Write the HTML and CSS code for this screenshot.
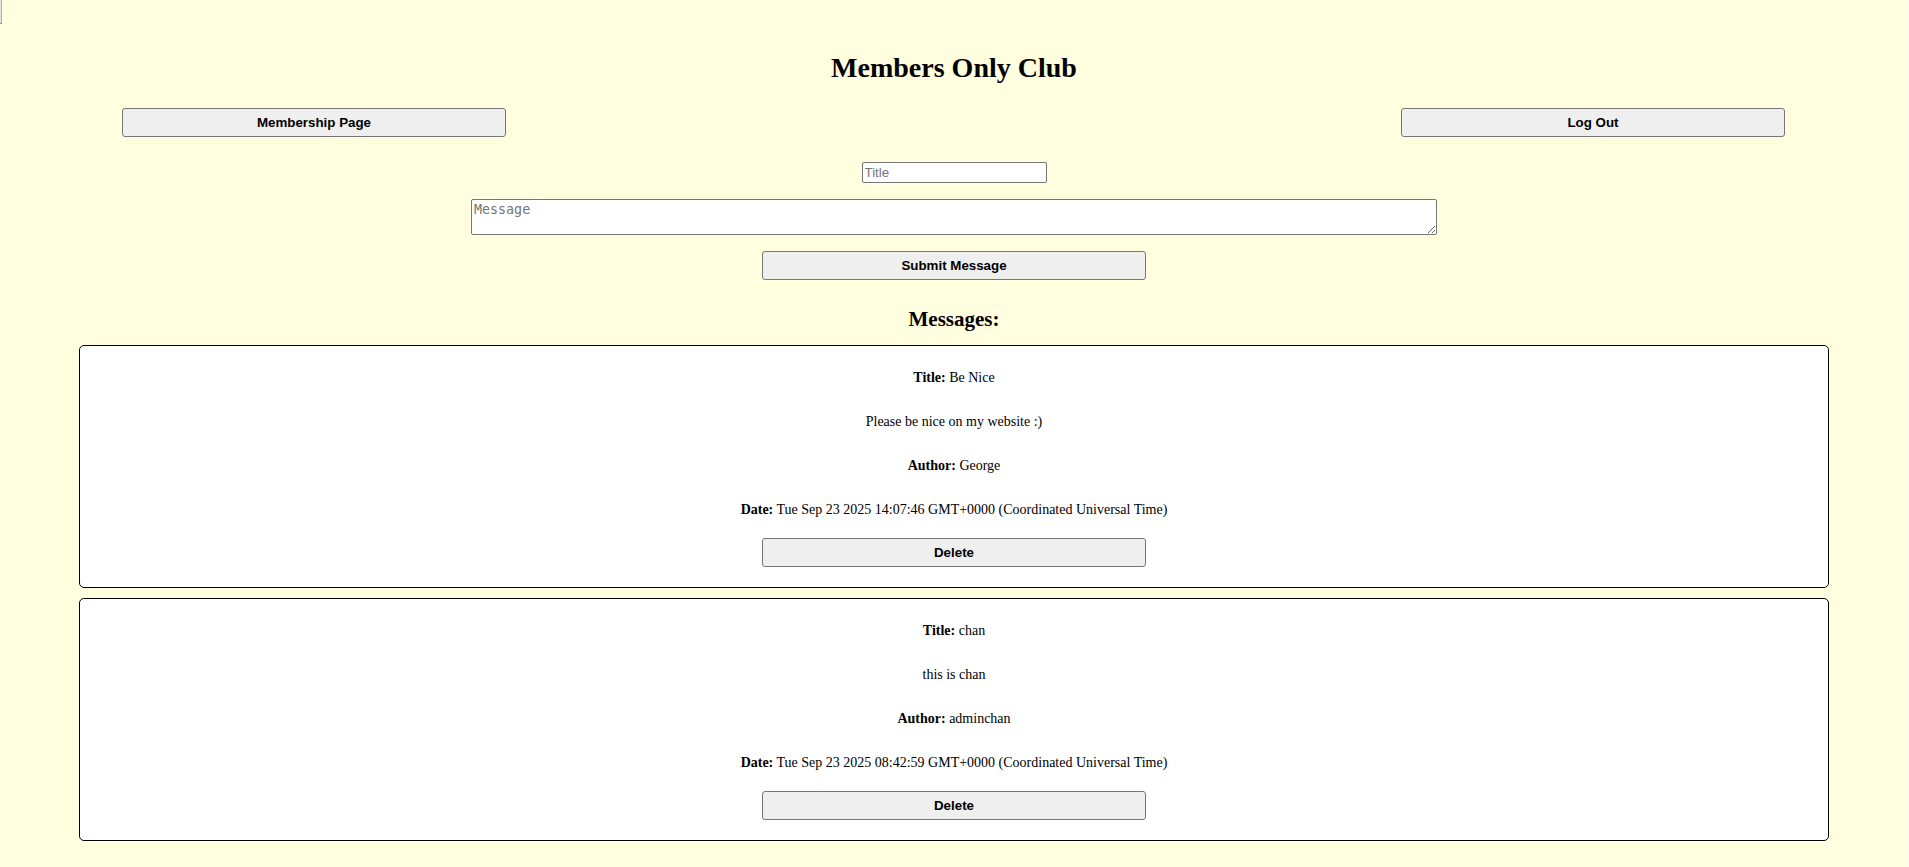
FILE: index.html
```html
<!DOCTYPE html>
<html lang="en">
<head>
<meta charset="utf-8">
<title>Members Only Club</title>
<link rel="stylesheet" href="styles.css">
</head>
<body>
<div class="corner"></div>
<h1 class="site-title">Members Only Club</h1>
<nav class="top-nav">
  <button class="btn" type="button">Membership Page</button>
  <button class="btn" type="button">Log Out</button>
</nav>
<form class="compose">
  <input class="title-input" type="text" placeholder="Title">
  <textarea class="message-input" placeholder="Message"></textarea>
  <button class="btn" type="button">Submit Message</button>
</form>
<h2 class="messages-heading">Messages:</h2>
<section class="messages">
  <article class="card">
    <p class="line"><b>Title:</b> Be Nice</p>
    <p class="line">Please be nice on my website :)</p>
    <p class="line"><b>Author:</b> George</p>
    <p class="line last"><b>Date:</b> Tue Sep 23 2025 14:07:46 GMT+0000 (Coordinated Universal Time)</p>
    <button class="btn" type="button">Delete</button>
  </article>
  <article class="card">
    <p class="line"><b>Title:</b> chan</p>
    <p class="line">this is chan</p>
    <p class="line"><b>Author:</b> adminchan</p>
    <p class="line last"><b>Date:</b> Tue Sep 23 2025 08:42:59 GMT+0000 (Coordinated Universal Time)</p>
    <button class="btn" type="button">Delete</button>
  </article>
</section>
</body>
</html>
```

FILE: styles.css
```css
html {
  background: #f7f7f3;
}
body {
  margin: 0 1px 0 0;
  min-height: 100vh;
  overflow: hidden;
  background: #ffffe0;
  font-family: "Liberation Serif", "Times New Roman", serif;
  color: #000;
}
.corner {
  width: 1px;
  height: 23px;
  background: #e4e4e4;
  border-bottom: 1px solid #8a8a8a;
  border-right: 1px solid #b0b0b0;
}
.site-title {
  margin: 28px 0 0;
  font-size: 28px;
  line-height: 32px;
  font-weight: bold;
  text-align: center;
}
.btn {
  width: 384px;
  box-sizing: border-box;
  padding: 6px;
  font-family: "Liberation Sans", Arial, sans-serif;
  font-size: 13.33px;
  line-height: 15px;
  font-weight: bold;
  color: #000;
  background: #efefef;
  border: 1px solid #767676;
  border-radius: 3px;
}
.top-nav {
  display: flex;
  justify-content: space-between;
  margin-top: 24px;
  padding: 0 123px 0 122px;
}
.compose {
  display: flex;
  flex-direction: column;
  align-items: center;
  margin-top: 25px;
}
.title-input {
  width: 185px;
  height: 21px;
  box-sizing: border-box;
  margin: 0;
  padding: 1px 2px;
  font-family: "Liberation Sans", Arial, sans-serif;
  font-size: 13.33px;
  border: 1px solid #767676;
  border-radius: 2px;
  background: #fff;
}
.title-input::placeholder {
  color: #757575;
}
.message-input {
  width: 966px;
  height: 36px;
  box-sizing: border-box;
  margin: 16px 0 0;
  padding: 2px;
  font-family: "DejaVu Sans Mono", monospace;
  font-size: 13.33px;
  border: 1px solid #767676;
  border-radius: 2px;
  background: #fff;
}
.message-input::placeholder {
  color: #757575;
}
.compose .btn {
  margin-top: 16px;
}
.messages-heading {
  margin: 27px 0 0;
  font-size: 21px;
  line-height: 24px;
  font-weight: bold;
  text-align: center;
}
.messages {
  margin-top: 14px;
}
.card {
  display: flex;
  flex-direction: column;
  align-items: center;
  margin: 0 79px 10px 79px;
  padding: 23px 0 20px;
  background: #fff;
  border: 1px solid #000;
  border-radius: 5px;
}
.line {
  margin: 0 0 26px;
  font-size: 14px;
  line-height: 18px;
  text-align: center;
}
.line.last {
  margin-bottom: 19px;
}
```
